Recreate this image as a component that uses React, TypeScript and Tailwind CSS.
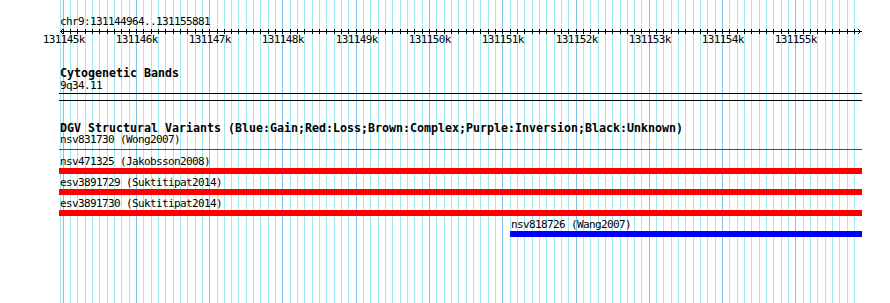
import React from "react";

const L = 60;
const W = 800;
const START = 131144964;
const END = 131155881;
const px = (bp: number) => Math.round(L + ((bp - START) * W) / (END - START + 1));

const gridPos: { x: number; major: boolean }[] = [];
for (let i = 0; i <= 108; i++) {
  gridPos.push({ x: px(131145000 + i * 100), major: i % 10 === 0 });
}
const labels: { x: number; t: string }[] = [];
for (let k = 131145; k <= 131155; k++) {
  labels.push({ x: px(k * 1000), t: `${k}k` });
}

const mono = { fontFamily: '"DejaVu Sans Mono", "Liberation Mono", monospace' };
const small = "whitespace-nowrap text-[11px] tracking-[-0.62px] leading-[10px] text-black";

function Grid() {
  return (
    <svg className="absolute left-0 top-0" width={890} height={303} shapeRendering="crispEdges">
      <rect x={60} y={0} width={1} height={303} fill="#a0eaf0" />
      {gridPos.map((g, i) => (
        <rect key={i} x={g.x} y={0} width={1} height={303} fill={g.major ? "#80c2ec" : "#a0eaf0"} />
      ))}
    </svg>
  );
}

function Ruler() {
  return (
    <div className="relative h-[19px] w-[802px]">
      <svg className="absolute left-0 top-0" width={802} height={8} shapeRendering="crispEdges">
        <rect x={0} y={4} width={802} height={1} fill="#000" />
        {gridPos.map((g, i) => (
          <rect key={i} x={g.x - L} y={2} width={1} height={5} fill="#000" />
        ))}
        <rect x={1} y={3} width={1} height={1} fill="#000" />
        <rect x={1} y={5} width={1} height={1} fill="#000" />
        <rect x={2} y={2} width={1} height={1} fill="#000" />
        <rect x={2} y={6} width={1} height={1} fill="#000" />
        <rect x={799} y={3} width={1} height={1} fill="#000" />
        <rect x={799} y={5} width={1} height={1} fill="#000" />
        <rect x={798} y={2} width={1} height={1} fill="#000" />
        <rect x={798} y={6} width={1} height={1} fill="#000" />
      </svg>
      {labels.map((l) => (
        <div
          key={l.t}
          className={`absolute top-[8px] -translate-x-1/2 ${small}`}
          style={{ left: l.x - L + 0.8 }}
        >
          {l.t}
        </div>
      ))}
    </div>
  );
}

function Row({ label, offset = 0, color }: { label: string; offset?: number; color: string }) {
  return (
    <div className="flex flex-col" style={{ marginLeft: offset }}>
      <div className={`h-[11px] ${small}`}>{label}</div>
      <div className={`-ml-px h-[6px] ${color}`} style={{ width: 803 - offset }} />
    </div>
  );
}

export default function App() {
  return (
    <div className="relative h-[303px] w-[890px] overflow-hidden bg-white" style={mono}>
      <Grid />
      <div className="relative flex flex-col pl-[60px] pt-[17px]">
        <div className={`h-[10px] ${small}`}>chr9:131144964..131155881</div>
        <Ruler />
        <div className="mt-[21px] h-[12px] whitespace-nowrap text-[11.63px] font-bold leading-[12px] text-black">Cytogenetic Bands</div>
        <div className={`mt-[2px] h-[10px] ${small}`}>9q34.11</div>
        <div className="-ml-px mt-[2px] h-px w-[803px] bg-black" />
        <div className="-ml-px mt-[6px] h-px w-[803px] bg-black" />
        <div className="mt-[21px] h-[12px] whitespace-nowrap text-[11.63px] font-bold leading-[12px] text-black">
          DGV Structural Variants (Blue:Gain;Red:Loss;Brown:Complex;Purple:Inversion;Black:Unknown)
        </div>
        <div className={`mt-[1px] h-[10px] ${small}`}>nsv831730 (Wong2007)</div>
        <div className="-ml-px mt-[4px] h-px w-[803px] bg-[#ff0000]" />
        <div className="mt-[7px] flex flex-col gap-[4px]">
          <Row label="nsv471325 (Jakobsson2008)" color="bg-[#ff0000]" />
          <Row label="esv3891729 (Suktitipat2014)" color="bg-[#ff0000]" />
          <Row label="esv3891730 (Suktitipat2014)" color="bg-[#ff0000]" />
          <Row label="nsv818726 (Wang2007)" offset={451} color="bg-[#0000ff]" />
        </div>
      </div>
    </div>
  );
}
